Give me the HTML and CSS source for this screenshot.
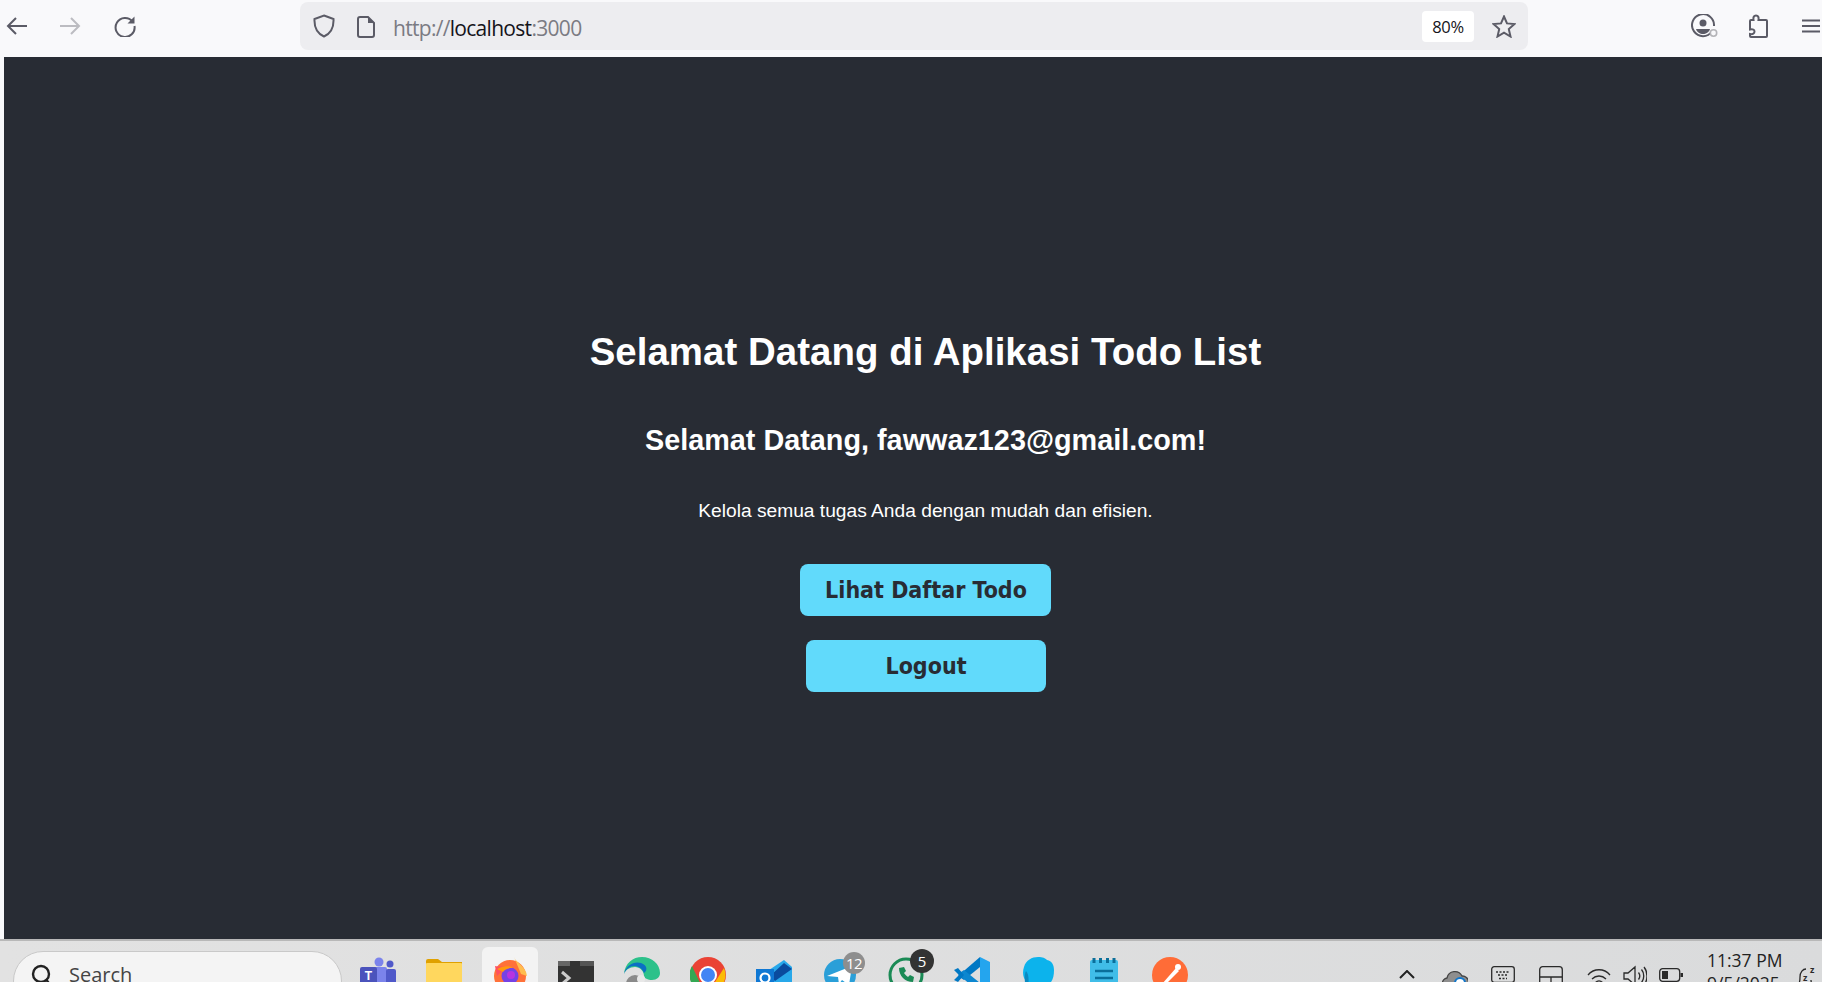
FILE: index.html
```html
<!DOCTYPE html>
<html lang="id">
<head>
<meta charset="utf-8">
<title>Todo List</title>
<link rel="stylesheet" href="styles.css">
</head>
<body>
<header class="toolbar">
  <svg class="tb-icon back" viewBox="0 0 22 20"><path d="M21 10H2M10 2 2 10l8 8"/></svg>
  <svg class="tb-icon forward" viewBox="0 0 22 20"><path d="M1 10h19M12 2l8 8-8 8"/></svg>
  <svg class="tb-icon reload" viewBox="0 0 22 22"><path d="M18.500 6.500A9.500 9.500 0 1 0 20.500 11"/><path class="solid" d="M20.500 1.500v7h-7z"/></svg>
  <div class="urlbar">
    <svg class="tb-icon shield" viewBox="0 0 22 24"><path d="M11 1.500 20.500 5c.4 8-1.600 14-9.500 17.500C3.100 19 1.100 13 1.500 5z"/></svg>
    <svg class="tb-icon doc" viewBox="0 0 18 22"><path d="M3 1h8l6 6v12a2 2 0 0 1-2 2H3a2 2 0 0 1-2-2V3a2 2 0 0 1 2-2z"/><path class="solid" d="M11 1l6 6h-6z"/></svg>
    <div class="url"><span class="dim">http://</span>localhost<span class="dim">:3000</span></div>
    <div class="zoom">80%</div>
    <svg class="tb-icon star" viewBox="0 0 24 23"><path d="M12 1.500 15 8.400l7.500.7-5.700 5 1.700 7.400L12 17.600 5.500 21.500l1.700-7.400-5.700-5L9 8.400z"/></svg>
  </div>
  <svg class="tb-icon account" viewBox="0 0 28 24"><path d="M21 17.500A11 11 0 1 1 23 12"/><circle class="solid" cx="12" cy="9" r="3.500"/><path class="solid" d="M5 15h14c-1 3.500-4 5-7 5s-6-1.500-7-5z"/><circle class="ring" cx="22.500" cy="19" r="3.200"/></svg>
  <svg class="tb-icon puzzle" viewBox="0 0 20 24"><path d="M8 1.500c2 0 3 1.500 2.500 4.500H18a1 1 0 0 1 1 1v15a1 1 0 0 1-1 1H3a1 1 0 0 1-1-1v-2c3 .5 4.500-.5 4.500-2.500S5 15 2 15.500V7a1 1 0 0 1 1-1h2.500C5 3 6 1.500 8 1.500z"/></svg>
  <svg class="tb-icon menu" viewBox="0 0 18 14"><path d="M0 1.500h18M0 7h18M0 12.500h18"/></svg>
</header>

<main class="page">
  <h1 class="title">Selamat Datang di Aplikasi Todo List</h1>
  <h2 class="subtitle">Selamat Datang, fawwaz123@gmail.com!</h2>
  <p class="lead">Kelola semua tugas Anda dengan mudah dan efisien.</p>
  <button class="btn btn-todo">Lihat Daftar Todo</button>
  <button class="btn btn-logout">Logout</button>
</main>

<footer class="taskbar">
  <div class="search">
    <svg class="search-icon" viewBox="0 0 22 24"><circle cx="10" cy="10" r="8"/><path d="M15.500 16 20 22"/></svg>
    <span class="search-text">Search</span>
  </div>
  <div class="apps">
    <div class="app">
      <svg viewBox="0 0 36 36"><circle cx="19" cy="5" r="4.500" fill="#7b83eb"/><circle cx="30" cy="7" r="3.500" fill="#5059c9"/><rect x="12" y="10" width="15" height="26" rx="2" fill="#7b83eb"/><rect x="26" y="12" width="10" height="24" rx="2" fill="#5059c9"/><rect y="10" width="17" height="17" rx="2" fill="#4b53bc"/><text x="8.500" y="23" class="teams-t">T</text></svg>
    </div>
    <div class="app">
      <svg viewBox="0 0 36 36"><path d="M0 4a2 2 0 0 1 2-2h10l4 3h20v6H0z" fill="#e0a100"/><rect y="6" width="36" height="30" rx="1" fill="#ffd75e"/><rect x="6" y="27" width="24" height="10" rx="3" fill="#0f80cc"/></svg>
    </div>
    <div class="app app-active">
      <svg viewBox="0 0 36 36"><circle cx="18" cy="19" r="16" fill="#ff7139"/><path d="M22 0c2 6 12 9 13 19l-6-2z" fill="#ffbd4f"/><path d="M3 9c3 1 7 0 11 1l-9 9z" fill="#ff4f5e"/><circle cx="18" cy="19" r="8.500" fill="#7542e5"/><circle cx="19" cy="18" r="4" fill="#b833e1"/><path d="M5 12c5-3 12-4 16-1-5 0-8 1-10 4z" fill="#ff980e"/></svg>
    </div>
    <div class="app">
      <svg viewBox="0 0 36 36"><rect y="4" width="36" height="32" rx="2" fill="#333"/><rect y="4" width="12" height="5" fill="#666"/><rect x="22" y="4" width="14" height="5" fill="#555"/><path d="M4 15l7 6-7 6" fill="none" stroke="#ccc" stroke-width="3"/><path d="M13 29h12" stroke="#ddd" stroke-width="3"/></svg>
    </div>
    <div class="app">
      <svg viewBox="0 0 36 36"><path d="M0 17C1 6 9 0 18 0c10 0 18 7 18 16 0 4-3 7-8 7-4 0-8-2-8-4 0-5-4-9-9-9S1 13 0 17z" fill="#2cc18a"/><path d="M0 17C2 8 10 4 17 6c6 2 7 7 3 10-2-5-6-7-10-7S2 12 0 17z" fill="#0b70c4"/><circle cx="11" cy="27" r="9" fill="#8a8a8a"/><circle cx="17" cy="22" r="4" fill="#e8e8e8"/></svg>
    </div>
    <div class="app">
      <svg viewBox="0 0 36 36"><circle cx="18" cy="18" r="18" fill="#ea4335"/><path d="M18 36 34 11a18 18 0 0 1-16 25z" fill="#fbbc05"/><path d="M2 9l9 19 7 8A18 18 0 0 1 2 9z" fill="#34a853"/><circle cx="18" cy="18" r="9" fill="#fff"/><circle cx="18" cy="18" r="7" fill="#4285f4"/></svg>
    </div>
    <div class="app">
      <svg viewBox="0 0 36 36"><path d="M10 15 28 3l8 7v26H10z" fill="#28a8ea"/><path d="M14 19 28 6l8 6-17 12z" fill="#0a4b9e"/><rect y="12" width="18" height="24" fill="#0f78d4"/><circle cx="9" cy="21" r="4.500" fill="none" stroke="#fff" stroke-width="2.200"/></svg>
    </div>
    <div class="app">
      <svg viewBox="0 0 36 36"><circle cx="18" cy="18" r="16" fill="#2a9fd8"/><path d="M5 19 30 9l-3 19-7-5-3 4-1-7z" fill="#fff"/></svg>
      <span class="badge badge-gray">12</span>
    </div>
    <div class="app">
      <svg viewBox="0 0 36 36"><circle cx="18" cy="18" r="16" fill="none" stroke="#1a8a55" stroke-width="3"/><path d="M11 11c0 8 6 14 14 14l1-5-4-2-2 2c-2-1-3-3-4-4l2-2-2-4z" fill="#1a8a55"/></svg>
      <span class="badge badge-dark">5</span>
    </div>
    <div class="app">
      <svg viewBox="0 0 36 36"><path d="M26 0l10 5v26l-10 5z" fill="#24a5ee"/><path d="M26 0v10L10 23 4 19z" fill="#0078c4"/><path d="M26 36V26L10 13l-6 4z" fill="#0c87d0"/><path d="M0 13l4-2 6 7-6 7-4-2 5-5z" fill="#0078c4"/></svg>
    </div>
    <div class="app">
      <svg viewBox="0 0 36 36"><path d="M4 10C6 3 12 0 18 0c5 0 7 1 9 3 5 1 7 5 7 10 0 8-2 14-9 16-6 2-12 1-17-3C3 22 2 16 4 10z" fill="#0cb3ec"/><path d="M6 14c3 3 3 10 2 15l-3-1c0-5-1-10 1-14z" fill="#0a8ac0"/></svg>
    </div>
    <div class="app">
      <svg viewBox="0 0 36 36"><rect x="4" y="3" width="28" height="33" rx="2" fill="#40bde8"/><g class="note-lines"><path d="M8 1v5M14.500 1v5M21.500 1v5M28 1v5" stroke-width="3"/><path d="M9 14h18M9 21h18M9 28h18" stroke-width="2.600"/></g></svg>
    </div>
    <div class="app">
      <svg viewBox="0 0 36 36"><circle cx="18" cy="18" r="18" fill="#ff6c37"/><path d="M10 27 24 11l3 3-15 15z" fill="#fff"/><circle cx="26" cy="10" r="3" fill="#fff"/></svg>
    </div>
  </div>
  <div class="tray">
    <svg class="chevron" viewBox="0 0 16 9"><path d="M1 8l7-7 7 7"/></svg>
    <svg class="tray-icon cloud" viewBox="0 0 26 24"><path class="cloud-fill" d="M6 22a5 5 0 0 1-1-10 8 8 0 0 1 15-2 6 6 0 0 1 1 12z"/><circle class="sync" cx="18" cy="17" r="5"/></svg>
    <svg class="tray-icon keyboard" viewBox="0 0 24 17"><rect x=".7" y=".7" width="22.600" height="15.600" rx="2.500"/><path class="dots" d="M5 6h14M7 9h10M8 12.500h8"/></svg>
    <svg class="tray-icon touchpad" viewBox="0 0 24 24"><rect x=".7" y=".7" width="22.600" height="19" rx="3"/><path d="M1 11h22M12 11v9"/></svg>
    <svg class="tray-icon wifi" viewBox="0 0 24 20"><path d="M1 8c6-7 16-7 22 0M5 12c4-4 10-4 14 0M8.500 15.500c2-2 5-2 7 0"/><circle class="solid-dark" cx="12" cy="18" r="1.600"/></svg>
    <svg class="tray-icon volume" viewBox="0 0 24 22"><path d="M1 8v6h4l7 6V2L5 8zM15.500 7.500c1.500 2 1.500 5 0 7M18.500 4.500c3 3.500 3 9.500 0 13M21 2c4 5 4 13 0 18"/></svg>
    <svg class="tray-icon battery" viewBox="0 0 24 14"><rect x=".7" y=".7" width="20" height="12.600" rx="3"/><rect class="solid-dark" x="3" y="3" width="6" height="8"/><rect class="solid-dark" x="21.500" y="5" width="2.500" height="4"/></svg>
    <div class="clock"><div>11:37 PM</div><div>9/5/2025</div></div>
    <svg class="tray-icon bell" viewBox="0 0 20 24"><path d="M1 21c2-2 2-4 2-8 0-5 3-8 6-8M1 21h15c-1-1-2-3-2-5"/><text x="6" y="17" class="zz">z</text><text x="13" y="9" class="zz">z</text></svg>
  </div>
</footer>
</body>
</html>
```

FILE: styles.css
```css
* { box-sizing: border-box; }
html, body { margin: 0; height: 982px; overflow: hidden; }
body {
  width: 1822px;
  display: flex;
  flex-direction: column;
  background: #f9f9fb;
  font-family: "Liberation Sans", Arial, sans-serif;
}

/* Browser toolbar */
.toolbar {
  height: 57px;
  flex: none;
  display: flex;
  align-items: flex-start;
  background: #f9f9fb;
}
.tb-icon { flex: none; fill: none; stroke: #5b5b66; stroke-width: 2; }
.tb-icon .solid { fill: #5b5b66; stroke: none; }
.tb-icon .ring { fill: #f9f9fb; stroke: #b4b4b8; stroke-width: 1.600; }
.back { width: 22px; height: 20px; margin: 16px 0 0 6px; }
.forward { width: 22px; height: 20px; margin: 16px 0 0 31px; stroke: #bcbcc1; }
.reload { width: 22px; height: 22px; margin: 15px 0 0 33px; }
.urlbar {
  width: 1228px;
  height: 48px;
  margin: 2px 0 0 164px;
  display: flex;
  align-items: flex-start;
  background: #ededf0;
  border-radius: 8px;
}
.shield { width: 22px; height: 24px; margin: 12px 0 0 13px; }
.doc { width: 18px; height: 22px; margin: 14px 0 0 22px; }
.url {
  width: 1029px;
  margin: 12px 0 0 18px;
  font: 21px/28px "Open Sans", sans-serif;
  letter-spacing: -0.7px;
  color: #15141a;
  white-space: nowrap;
}
.dim { color: #7b7b83; }
.zoom {
  width: 52px;
  height: 31px;
  margin: 9px 0 0;
  background: #fff;
  border-radius: 4px;
  font: 16.500px/31px "Open Sans", sans-serif;
  letter-spacing: -0.3px;
  text-align: center;
  color: #15141a;
}
.star { width: 24px; height: 23px; margin: 13px 0 0 18px; }
.account { width: 28px; height: 24px; margin: 14px 0 0 163px; }
.puzzle { width: 20px; height: 24px; margin: 14px 0 0 29px; }
.menu { width: 18px; height: 14px; margin: 19px 0 0 34px; }

/* Page */
.page {
  flex: 1;
  min-height: 0;
  margin-left: 4px;
  padding-left: 25px;
  background: #282c34;
  color: #fff;
  display: flex;
  flex-direction: column;
  align-items: center;
}
.title { margin: 274px 0 0; font-size: 38.400px; line-height: 42px; font-weight: 700; letter-spacing: 0.05px; }
.subtitle { margin: 50px 0 0; font-size: 28.800px; line-height: 34px; font-weight: 700; }
.lead { margin: 43px 0 0; font-size: 19.200px; line-height: 22px; }
.btn {
  display: block;
  height: 52px;
  border: 0;
  border-radius: 8px;
  background: #61dafb;
  color: #282c34;
  font-family: "DejaVu Sans", sans-serif;
  font-stretch: condensed;
  font-weight: 700;
  font-size: 23px;
  line-height: 28px;
  padding: 0 0 0 1px;
}
.btn-todo { width: 251px; margin-top: 42px; }
.btn-logout { width: 240px; margin-top: 24px; }

/* Windows taskbar */
.taskbar {
  height: 43px;
  flex: none;
  display: flex;
  align-items: flex-start;
  overflow: hidden;
  background: linear-gradient(90deg, #e2e2e2, #dadbdc);
  border-top: 2px solid #b8b8b8;
  color: #222;
}
.search {
  width: 329px;
  height: 60px;
  margin: 10px 0 0 13px;
  flex: none;
  display: flex;
  align-items: flex-start;
  background: #f4f4f4;
  border: 1px solid #c9c9c9;
  border-radius: 30px;
}
.search-icon { width: 22px; height: 24px; margin: 12px 0 0 17px; fill: none; stroke: #222; stroke-width: 2.400; }
.search-text { margin: 9px 0 0 16px; font: 20px/27px "Open Sans", sans-serif; color: #444; }
.apps { display: flex; margin-left: 3px; flex: none; }
.app { position: relative; width: 66px; height: 60px; padding: 16px 15px 0; flex: none; }
.app svg { display: block; width: 36px; height: 36px; }
.app-active { background: #f3f3f3; border-radius: 6px; margin: 6px 5px 0; width: 56px; padding: 10px 10px 0; }
.teams-t { font: 700 12px "Liberation Sans", sans-serif; fill: #fff; text-anchor: middle; }
.note-lines { stroke: #0a6f9a; fill: none; }
.badge {
  position: absolute;
  border-radius: 50%;
  text-align: center;
  color: #fff;
  font: 15px/22px "Open Sans", sans-serif;
}
.badge-gray { left: 36px; top: 11px; width: 22px; height: 22px; background: #8e8e8e; letter-spacing: -0.5px; }
.badge-dark { left: 37px; top: 8px; width: 24px; height: 24px; line-height: 24px; background: #333; }
.tray { display: flex; align-items: flex-start; margin-left: 196px; flex: none; }
.chevron { width: 16px; height: 9px; margin-top: 29px; fill: none; stroke: #222; stroke-width: 2; flex: none; }
.tray-icon { flex: none; fill: none; stroke: #2a2a2a; stroke-width: 1.300; }
.cloud { width: 26px; height: 24px; margin: 25px 0 0 27px; }
.cloud-fill { fill: #8e8e8e; stroke: #444; }
.sync { fill: #fff; stroke: #1177cc; stroke-width: 2; }
.keyboard { width: 24px; height: 17px; margin: 25px 0 0 23px; }
.dots { stroke-dasharray: 2 1.500; }
.touchpad { width: 24px; height: 24px; margin: 25px 0 0 24px; }
.wifi { width: 24px; height: 20px; margin: 26px 0 0 24px; }
.volume { width: 24px; height: 22px; margin: 24px 0 0 12px; }
.battery { width: 24px; height: 14px; margin: 27px 0 0 12px; }
.solid-dark { fill: #2a2a2a; stroke: none; }
.clock { width: 90px; margin: 8px 0 0 24px; font: 17.500px/23px "Open Sans", sans-serif; color: #222; white-space: nowrap; flex: none; }
.bell { width: 20px; height: 24px; margin: 23px 0 0 0; }
.zz { font: 700 9px "Open Sans", sans-serif; fill: #2a2a2a; stroke: none; }
```
